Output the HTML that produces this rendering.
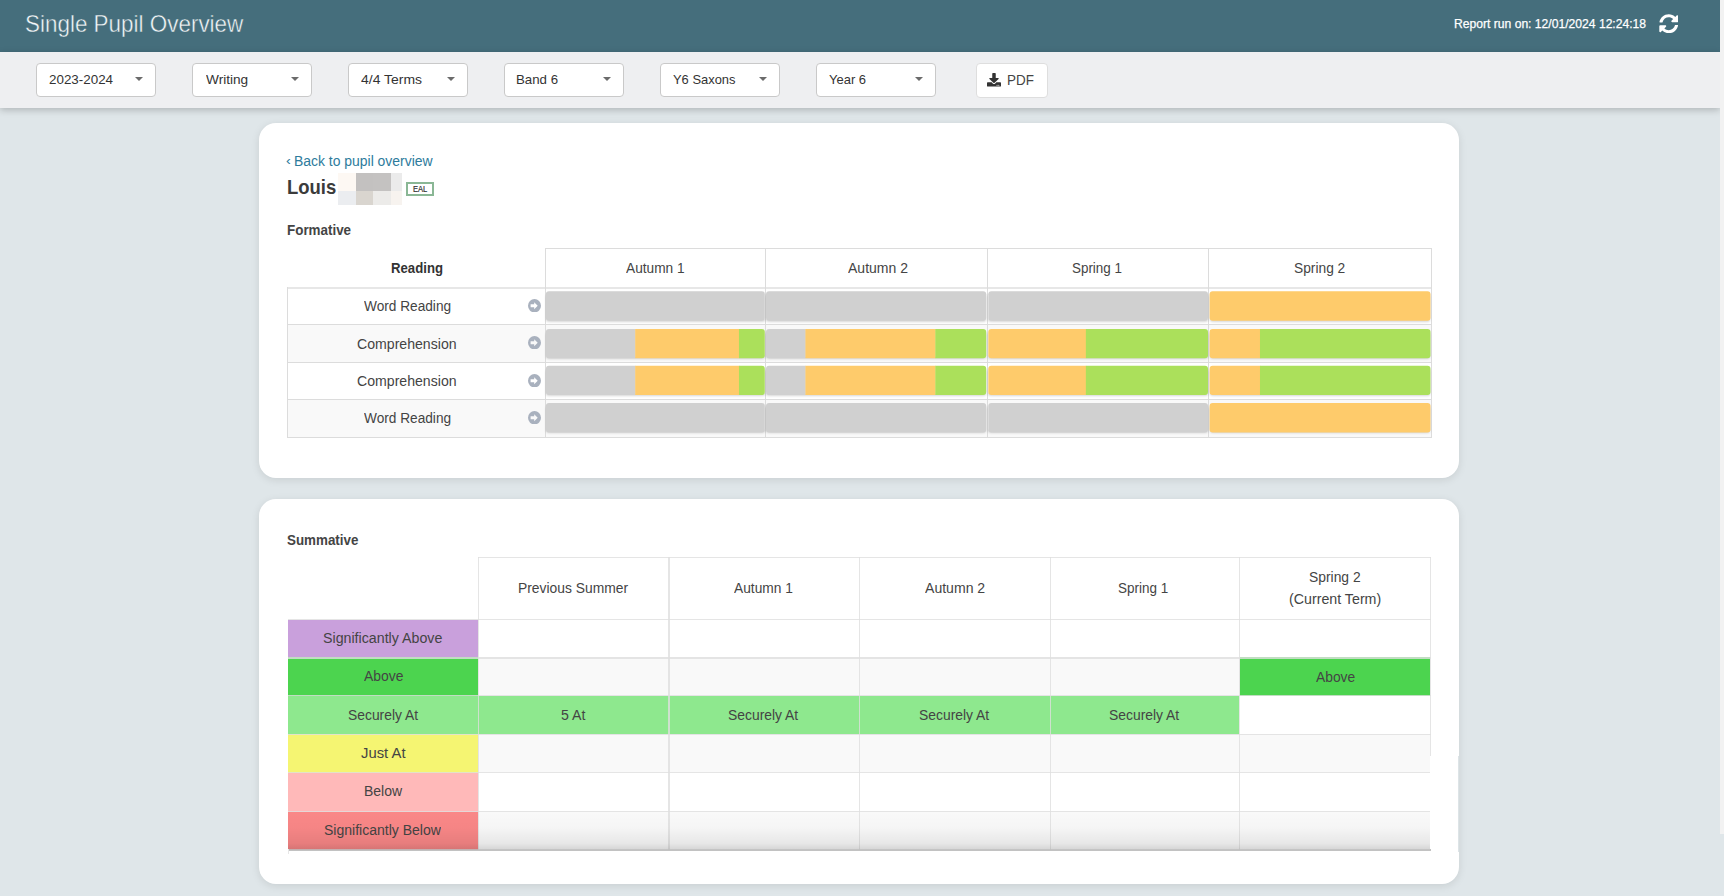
<!DOCTYPE html>
<html lang="en">
<head>
<meta charset="utf-8">
<title>Single Pupil Overview</title>
<style>
*{box-sizing:border-box;margin:0;padding:0}
html,body{width:1724px;height:896px;overflow:hidden}
body{background:#dfe6e9;font-family:"Liberation Sans",Arial,sans-serif;color:#444;position:relative;font-size:14px}
#app{position:absolute;left:0;top:0;width:1720px;height:896px;background:#dfe6e9;overflow:hidden}
#strip{position:absolute;left:1720px;top:0;width:4px;height:834px;background:#f2f2f2}
#hdr{position:absolute;left:0;top:0;width:1720px;height:52px;background:#456e7c}
#bar{position:absolute;left:0;top:52px;width:1720px;height:56px;background:#eeeff1;box-shadow:0 2px 7px rgba(0,0,0,.22)}
.dd{position:absolute;top:63px;width:120px;height:34px;border:1px solid #c9c9c9;border-radius:4px;background:#fff}
.dd:after{content:"";position:absolute;left:97.5px;top:13px;border-left:4.25px solid transparent;border-right:4.25px solid transparent;border-top:4.5px solid #6b6b6b}
.pdf{position:absolute;left:976px;top:63px;width:72px;height:35px;border:1px solid #dedede;border-radius:4px;background:#fff}
.card{position:absolute;left:259px;width:1200px;background:#fff;border-radius:17px;box-shadow:0 2px 9px rgba(0,0,0,.1)}
#c1{top:123px;height:355px}
#c2{top:499px;height:385px}
.x{position:absolute;white-space:nowrap;line-height:1;transform-origin:0 0;font-weight:normal}
.eal{position:absolute;left:406px;top:182px;width:28px;height:14px;border:2px solid #8ab795}
.px,.bg,svg{position:absolute}
.vl{position:absolute;width:1px;background:#dcdcdc}
.hl{position:absolute;height:1px;background:#dcdcdc}
.br{position:absolute;height:29.7px;border-radius:4px;overflow:hidden;background:#d0d0d0}
.sh{position:absolute;height:28.4px;border-radius:3px;box-shadow:0 2.5px 2.5px -.5px rgba(0,0,0,.16)}
.br i{position:absolute;top:0;height:30px}
.o{background:#fecb6b}.g{background:#abe05b}
</style>
</head>
<body>
<div id="app">
<div id="hdr"></div>
<h1 class="x" style="left:24.59px;top:11.60px;font-size:24.10px;color:#f3f7f8;transform:scaleX(0.9314);-webkit-text-stroke:.45px #456e7c;">Single Pupil Overview</h1>
<div class="x" style="left:1453.63px;top:17.90px;font-size:12.60px;color:#fff;transform:scaleX(0.9625);-webkit-text-stroke:.25px #fff;">Report run on: 12/01/2024 12:24:18</div>
<svg style="left:1658.8px;top:13.8px" width="19.5" height="19.5" viewBox="0 0 512 512"><path fill="#fff" d="M370.72 133.28C339.458 104.008 298.888 87.962 255.848 88c-77.458.068-144.328 53.178-162.791 126.85-1.344 5.363-6.122 9.150-11.651 9.150H24.103c-7.498 0-13.194-6.807-11.807-14.176C33.933 94.924 134.813 8 256 8c66.448 0 126.791 26.136 171.315 68.685L463.030 40.970C478.149 25.851 504 36.559 504 57.941V192c0 13.255-10.745 24-24 24H345.941c-21.382 0-32.090-25.851-16.971-40.971l41.750-41.749zM32 296h134.059c21.382 0 32.090 25.851 16.971 40.971l-41.750 41.750c31.262 29.273 71.835 45.319 114.876 45.280 77.418-.070 144.315-53.144 162.787-126.849 1.344-5.363 6.122-9.150 11.651-9.150h57.304c7.498 0 13.194 6.807 11.807 14.176C478.067 417.076 377.187 504 256 504c-66.448 0-126.791-26.136-171.315-68.685L48.970 471.030C33.851 486.149 8 475.441 8 454.059V320c0-13.255 10.745-24 24-24z"/></svg>
<div id="bar"></div>
<div class="dd" style="left:36px"></div>
<div class="x" style="left:48.73px;top:73.30px;font-size:13.45px;color:#333;transform:scaleX(0.9966);">2023-2024</div>
<div class="dd" style="left:192px"></div>
<div class="x" style="left:205.68px;top:73.30px;font-size:13.45px;color:#333;transform:scaleX(1.0155);">Writing</div>
<div class="dd" style="left:348px"></div>
<div class="x" style="left:361.22px;top:73.30px;font-size:13.45px;color:#333;transform:scaleX(1.0381);">4/4 Terms</div>
<div class="dd" style="left:504px"></div>
<div class="x" style="left:516.44px;top:73.30px;font-size:13.45px;color:#333;transform:scaleX(0.9873);">Band 6</div>
<div class="dd" style="left:660px"></div>
<div class="x" style="left:672.93px;top:73.30px;font-size:13.45px;color:#333;transform:scaleX(0.9615);">Y6 Saxons</div>
<div class="dd" style="left:816px"></div>
<div class="x" style="left:829.18px;top:73.30px;font-size:13.45px;color:#333;transform:scaleX(0.9660);">Year 6</div>
<div class="pdf"></div>
<svg style="left:987px;top:73px" width="14" height="13.6" viewBox="0 0 512 512" preserveAspectRatio="none"><path fill="#333" d="M216 0h80c13.300 0 24 10.700 24 24v168h87.700c17.800 0 26.700 21.500 14.100 34.100L269.700 378.300c-7.500 7.500-19.800 7.500-27.300 0L90.100 226.100c-12.600-12.600-3.700-34.100 14.100-34.100H192V24c0-13.300 10.700-24 24-24zm296 376v112c0 13.300-10.700 24-24 24H24c-13.300 0-24-10.700-24-24V376c0-13.300 10.700-24 24-24h146.700l49 49c20.100 20.100 52.500 20.100 72.600 0l49-49H488c13.300 0 24 10.700 24 24zm-124 88c0-11-9-20-20-20s-20 9-20 20 9 20 20 20 20-9 20-20zm64 0c0-11-9-20-20-20s-20 9-20 20 9 20 20 20 20-9 20-20z"/></svg>
<div class="x" style="left:1006.93px;top:73.00px;font-size:14.80px;color:#444;transform:scaleX(0.9075);">PDF</div>
<div class="card" id="c1"></div><div class="card" id="c2"></div>
<a><span class="x" style="left:286.32px;top:154.40px;font-size:13.00px;color:#2d7b9c;transform:scaleX(1.1077);">&lsaquo;</span><span class="x" style="left:294.18px;top:153.80px;font-size:14.45px;color:#2d7b9c;transform:scaleX(0.9648);">Back to pupil overview</span></a>
<h2 class="x" style="left:286.80px;top:176.60px;font-size:20.20px;font-weight:bold;color:#3b3b3b;transform:scaleX(0.9147);">Louis</h2>
<div class="px" style="left:338.0px;top:172.8px;width:18.1px;height:18.4px;background:#fdf8f3"></div>
<div class="px" style="left:355.9px;top:172.8px;width:17.3px;height:18.4px;background:#c3c1c0"></div>
<div class="px" style="left:373.0px;top:172.8px;width:18.2px;height:18.4px;background:#c4c2c1"></div>
<div class="px" style="left:391.0px;top:172.8px;width:11.2px;height:18.4px;background:#ebebeb"></div>
<div class="px" style="left:338.0px;top:191.0px;width:18.1px;height:14.1px;background:#ebedf0"></div>
<div class="px" style="left:355.9px;top:191.0px;width:17.3px;height:14.1px;background:#d9d5cf"></div>
<div class="px" style="left:373.0px;top:191.0px;width:18.2px;height:14.1px;background:#ecebe9"></div>
<div class="px" style="left:391.0px;top:191.0px;width:11.2px;height:14.1px;background:#f7f3ef"></div>
<div class="eal"></div>
<div class="x" style="left:412.89px;top:185.90px;font-size:8.20px;color:#333;transform:scaleX(0.9249);-webkit-text-stroke:.2px #333;">EAL</div>
<h3 class="x" style="left:286.63px;top:222.90px;font-size:14.45px;font-weight:bold;color:#444;transform:scaleX(0.9286);">Formative</h3>
<div class="bg" style="left:287px;top:324.4px;width:1145.0px;height:37.6px;background:#f9f9f9"></div>
<div class="bg" style="left:287px;top:399.3px;width:1145.0px;height:37.4px;background:#f9f9f9"></div>
<div class="hl" style="left:545px;top:248px;width:887px"></div>
<div class="hl" style="left:287px;top:287.3px;width:1145.0px;height:2px;background:#e7e7e7"></div>
<div class="hl" style="left:287px;top:324.4px;width:1145.0px"></div>
<div class="hl" style="left:287px;top:362.0px;width:1145.0px"></div>
<div class="hl" style="left:287px;top:399.3px;width:1145.0px"></div>
<div class="hl" style="left:287px;top:436.7px;width:1145.0px"></div>
<div class="vl" style="left:287px;top:287.3px;height:150.4px"></div>
<div class="vl" style="left:545px;top:248px;height:189.7px"></div>
<div class="vl" style="left:765px;top:248px;height:189.7px"></div>
<div class="vl" style="left:987px;top:248px;height:189.7px"></div>
<div class="vl" style="left:1208px;top:248px;height:189.7px"></div>
<div class="vl" style="left:1431px;top:248px;height:189.7px"></div>
<div class="x" style="left:390.54px;top:259.90px;font-size:15.10px;font-weight:bold;color:#333;transform:scaleX(0.8732);">Reading</div>
<div class="x" style="left:625.75px;top:259.80px;font-size:15.10px;color:#444;transform:scaleX(0.9070);">Autumn 1</div>
<div class="x" style="left:847.50px;top:259.80px;font-size:15.10px;color:#444;transform:scaleX(0.9276);">Autumn 2</div>
<div class="x" style="left:1072.40px;top:259.80px;font-size:15.10px;color:#444;transform:scaleX(0.8882);">Spring 1</div>
<div class="x" style="left:1293.63px;top:259.80px;font-size:15.10px;color:#444;transform:scaleX(0.9122);">Spring 2</div>
<div class="x" style="left:364.03px;top:298.40px;font-size:15.10px;color:#444;transform:scaleX(0.9054);">Word Reading</div>
<svg style="left:527.75px;top:298.7px" width="13" height="13.4" viewBox="0 0 13 13" preserveAspectRatio="none"><path fill="#a9b1be" fill-rule="evenodd" d="M6.5 0a6.5 6.500 0 1 0 0 13a6.500 6.500 0 1 0 0-13zM2.600 5.100h3.600v-2l3.500 3.400l-3.500 3.400v-2h-3.600z"/></svg>
<div class="sh" style="left:545.9px;top:291.3px;width:218.9px"></div>
<div class="sh" style="left:766.0px;top:291.3px;width:220.2px"></div>
<div class="sh" style="left:988.3px;top:291.3px;width:219.7px"></div>
<div class="sh" style="left:1209.6px;top:291.3px;width:220.9px"></div>
<div class="x" style="left:357.19px;top:336.00px;font-size:15.10px;color:#444;transform:scaleX(0.9345);">Comprehension</div>
<svg style="left:527.75px;top:335.9px" width="13" height="13.4" viewBox="0 0 13 13" preserveAspectRatio="none"><path fill="#a9b1be" fill-rule="evenodd" d="M6.5 0a6.5 6.500 0 1 0 0 13a6.500 6.500 0 1 0 0-13zM2.600 5.100h3.600v-2l3.500 3.400l-3.500 3.400v-2h-3.600z"/></svg>
<div class="sh" style="left:545.9px;top:328.9px;width:218.9px"></div>
<div class="sh" style="left:766.0px;top:328.9px;width:220.2px"></div>
<div class="sh" style="left:988.3px;top:328.9px;width:219.7px"></div>
<div class="sh" style="left:1209.6px;top:328.9px;width:220.9px"></div>
<div class="x" style="left:357.19px;top:373.00px;font-size:15.10px;color:#444;transform:scaleX(0.9345);">Comprehension</div>
<svg style="left:527.75px;top:373.5px" width="13" height="13.4" viewBox="0 0 13 13" preserveAspectRatio="none"><path fill="#a9b1be" fill-rule="evenodd" d="M6.5 0a6.5 6.500 0 1 0 0 13a6.500 6.500 0 1 0 0-13zM2.600 5.100h3.600v-2l3.500 3.400l-3.500 3.400v-2h-3.600z"/></svg>
<div class="sh" style="left:545.9px;top:365.7px;width:218.9px"></div>
<div class="sh" style="left:766.0px;top:365.7px;width:220.2px"></div>
<div class="sh" style="left:988.3px;top:365.7px;width:219.7px"></div>
<div class="sh" style="left:1209.6px;top:365.7px;width:220.9px"></div>
<div class="x" style="left:364.03px;top:410.30px;font-size:15.10px;color:#444;transform:scaleX(0.9054);">Word Reading</div>
<svg style="left:527.75px;top:410.7px" width="13" height="13.4" viewBox="0 0 13 13" preserveAspectRatio="none"><path fill="#a9b1be" fill-rule="evenodd" d="M6.5 0a6.5 6.500 0 1 0 0 13a6.500 6.500 0 1 0 0-13zM2.600 5.100h3.600v-2l3.500 3.400l-3.500 3.400v-2h-3.600z"/></svg>
<div class="sh" style="left:545.9px;top:403.0px;width:218.9px"></div>
<div class="sh" style="left:766.0px;top:403.0px;width:220.2px"></div>
<div class="sh" style="left:988.3px;top:403.0px;width:219.7px"></div>
<div class="sh" style="left:1209.6px;top:403.0px;width:220.9px"></div>
<svg style="left:540px;top:285px" width="895" height="155" viewBox="540 285 895 155"><path fill="#d0d0d0" d="M548.90 291.30H761.80A3 3 0 0 1 764.80 294.30V317.70A3 3 0 0 1 761.80 320.70H548.90A3 3 0 0 1 545.90 317.70V294.30A3 3 0 0 1 548.90 291.30Z"/><path fill="#d0d0d0" d="M769.00 291.30H983.20A3 3 0 0 1 986.20 294.30V317.70A3 3 0 0 1 983.20 320.70H769.00A3 3 0 0 1 766.00 317.70V294.30A3 3 0 0 1 769.00 291.30Z"/><path fill="#d0d0d0" d="M991.30 291.30H1205.00A3 3 0 0 1 1208.00 294.30V317.70A3 3 0 0 1 1205.00 320.70H991.30A3 3 0 0 1 988.30 317.70V294.30A3 3 0 0 1 991.30 291.30Z"/><path fill="#fecb6b" d="M1212.60 291.30H1427.50A3 3 0 0 1 1430.50 294.30V317.70A3 3 0 0 1 1427.50 320.70H1212.60A3 3 0 0 1 1209.60 317.70V294.30A3 3 0 0 1 1212.60 291.30Z"/><path fill="#d0d0d0" d="M548.90 328.90H635.61V358.30H548.90A3 3 0 0 1 545.90 355.30V331.90A3 3 0 0 1 548.90 328.90Z"/><path fill="#fecb6b" d="M635.21 328.90H739.37V358.30H635.21V328.90Z"/><path fill="#abe05b" d="M738.97 328.90H761.80A3 3 0 0 1 764.80 331.90V355.30A3 3 0 0 1 761.80 358.30H738.97V328.90Z"/><path fill="#d0d0d0" d="M769.00 328.90H805.82V358.30H769.00A3 3 0 0 1 766.00 355.30V331.90A3 3 0 0 1 769.00 328.90Z"/><path fill="#fecb6b" d="M805.42 328.90H935.73V358.30H805.42V328.90Z"/><path fill="#abe05b" d="M935.33 328.90H983.20A3 3 0 0 1 986.20 331.90V355.30A3 3 0 0 1 983.20 358.30H935.33V328.90Z"/><path fill="#fecb6b" d="M991.30 328.90H1086.25V358.30H991.30A3 3 0 0 1 988.30 355.30V331.90A3 3 0 0 1 991.30 328.90Z"/><path fill="#abe05b" d="M1085.85 328.90H1205.00A3 3 0 0 1 1208.00 331.90V355.30A3 3 0 0 1 1205.00 358.30H1085.85V328.90Z"/><path fill="#fecb6b" d="M1212.60 328.90H1260.37V358.30H1212.60A3 3 0 0 1 1209.60 355.30V331.90A3 3 0 0 1 1212.60 328.90Z"/><path fill="#abe05b" d="M1259.97 328.90H1427.50A3 3 0 0 1 1430.50 331.90V355.30A3 3 0 0 1 1427.50 358.30H1259.97V328.90Z"/><path fill="#d0d0d0" d="M548.90 365.70H635.61V395.10H548.90A3 3 0 0 1 545.90 392.10V368.70A3 3 0 0 1 548.90 365.70Z"/><path fill="#fecb6b" d="M635.21 365.70H739.37V395.10H635.21V365.70Z"/><path fill="#abe05b" d="M738.97 365.70H761.80A3 3 0 0 1 764.80 368.70V392.10A3 3 0 0 1 761.80 395.10H738.97V365.70Z"/><path fill="#d0d0d0" d="M769.00 365.70H805.82V395.10H769.00A3 3 0 0 1 766.00 392.10V368.70A3 3 0 0 1 769.00 365.70Z"/><path fill="#fecb6b" d="M805.42 365.70H935.73V395.10H805.42V365.70Z"/><path fill="#abe05b" d="M935.33 365.70H983.20A3 3 0 0 1 986.20 368.70V392.10A3 3 0 0 1 983.20 395.10H935.33V365.70Z"/><path fill="#fecb6b" d="M991.30 365.70H1086.25V395.10H991.30A3 3 0 0 1 988.30 392.10V368.70A3 3 0 0 1 991.30 365.70Z"/><path fill="#abe05b" d="M1085.85 365.70H1205.00A3 3 0 0 1 1208.00 368.70V392.10A3 3 0 0 1 1205.00 395.10H1085.85V365.70Z"/><path fill="#fecb6b" d="M1212.60 365.70H1260.37V395.10H1212.60A3 3 0 0 1 1209.60 392.10V368.70A3 3 0 0 1 1212.60 365.70Z"/><path fill="#abe05b" d="M1259.97 365.70H1427.50A3 3 0 0 1 1430.50 368.70V392.10A3 3 0 0 1 1427.50 395.10H1259.97V365.70Z"/><path fill="#d0d0d0" d="M548.90 403.00H761.80A3 3 0 0 1 764.80 406.00V429.40A3 3 0 0 1 761.80 432.40H548.90A3 3 0 0 1 545.90 429.40V406.00A3 3 0 0 1 548.90 403.00Z"/><path fill="#d0d0d0" d="M769.00 403.00H983.20A3 3 0 0 1 986.20 406.00V429.40A3 3 0 0 1 983.20 432.40H769.00A3 3 0 0 1 766.00 429.40V406.00A3 3 0 0 1 769.00 403.00Z"/><path fill="#d0d0d0" d="M991.30 403.00H1205.00A3 3 0 0 1 1208.00 406.00V429.40A3 3 0 0 1 1205.00 432.40H991.30A3 3 0 0 1 988.30 429.40V406.00A3 3 0 0 1 991.30 403.00Z"/><path fill="#fecb6b" d="M1212.60 403.00H1427.50A3 3 0 0 1 1430.50 406.00V429.40A3 3 0 0 1 1427.50 432.40H1212.60A3 3 0 0 1 1209.60 429.40V406.00A3 3 0 0 1 1212.60 403.00Z"/></svg>
<h3 class="x" style="left:286.80px;top:533.00px;font-size:14.45px;font-weight:bold;color:#444;transform:scaleX(0.9271);">Summative</h3>
<div class="bg" style="left:477.9px;top:656.6px;width:952.3px;height:38.5px;background:#f9f9f9"></div>
<div class="bg" style="left:477.9px;top:733.7px;width:952.3px;height:38.6px;background:#f9f9f9"></div>
<div class="bg" style="left:477.9px;top:811.2px;width:952.3px;height:37.6px;background:#f9f9f9"></div>
<div class="bg" style="left:287.6px;top:619.5px;width:190.8px;height:37.9px;background:#c9a0dc"></div>
<div class="bg" style="left:287.6px;top:657.1px;width:190.8px;height:38.8px;background:#4cd44f"></div>
<div class="bg" style="left:287.6px;top:695.6px;width:190.8px;height:38.9px;background:#8ee88e"></div>
<div class="bg" style="left:287.6px;top:734.2px;width:190.8px;height:38.9px;background:#f5f572"></div>
<div class="bg" style="left:287.6px;top:772.8px;width:190.8px;height:39.2px;background:#ffb9b9"></div>
<div class="bg" style="left:287.6px;top:811.7px;width:190.8px;height:37.9px;background:#f98787"></div>
<div class="bg" style="left:477.9px;top:695.6px;width:761.6px;height:38.9px;background:#8ee88e"></div>
<div class="bg" style="left:1240.0px;top:657.1px;width:190.2px;height:38.8px;background:#4cd44f"></div>
<div class="hl" style="left:477.9px;top:556.7px;width:953.1px;height:1.0px;background:rgba(222,222,222,.8)"></div>
<div class="hl" style="left:287.6px;top:619.0px;width:1143.4px;height:1.0px;background:rgba(222,222,222,.8)"></div>
<div class="hl" style="left:287.6px;top:656.6px;width:1143.4px;height:2.2px;background:rgba(222,222,222,.8)"></div>
<div class="hl" style="left:287.6px;top:695.1px;width:1143.4px;height:0.9px;background:rgba(222,222,222,.8)"></div>
<div class="hl" style="left:287.6px;top:733.7px;width:1143.4px;height:0.9px;background:rgba(222,222,222,.8)"></div>
<div class="hl" style="left:287.6px;top:772.3px;width:1143.4px;height:0.9px;background:rgba(222,222,222,.8)"></div>
<div class="hl" style="left:287.6px;top:811.2px;width:1143.4px;height:0.9px;background:rgba(222,222,222,.8)"></div>
<div class="hl" style="left:287.6px;top:848.8px;width:1143.4px;height:2.0px;background:rgba(222,222,222,.8)"></div>
<div class="vl" style="left:477.9px;top:556.7px;height:293.1px;background:rgba(222,222,222,.8);width:1.0px"></div>
<div class="vl" style="left:668.4px;top:556.7px;height:293.1px;background:rgba(222,222,222,.8);width:1.8px"></div>
<div class="vl" style="left:858.6px;top:556.7px;height:293.1px;background:rgba(222,222,222,.8);width:1.0px"></div>
<div class="vl" style="left:1050.3px;top:556.7px;height:293.1px;background:rgba(222,222,222,.8);width:1.0px"></div>
<div class="vl" style="left:1239.2px;top:556.7px;height:293.1px;background:rgba(222,222,222,.8);width:1.0px"></div>
<div class="vl" style="left:1430.2px;top:556.7px;height:293.1px;background:rgba(222,222,222,.8);width:1.0px"></div>
<div class="x" style="left:323.46px;top:629.80px;font-size:15.10px;color:#444;transform:scaleX(0.9417);">Significantly Above</div>
<div class="x" style="left:363.75px;top:668.40px;font-size:15.10px;color:#444;transform:scaleX(0.9210);">Above</div>
<div class="x" style="left:347.83px;top:706.90px;font-size:15.10px;color:#444;transform:scaleX(0.9183);">Securely At</div>
<div class="x" style="left:360.83px;top:744.60px;font-size:15.10px;color:#444;transform:scaleX(0.9823);">Just At</div>
<div class="x" style="left:363.53px;top:783.00px;font-size:15.10px;color:#444;transform:scaleX(0.9264);">Below</div>
<div class="x" style="left:324.37px;top:821.70px;font-size:15.10px;color:#444;transform:scaleX(0.9285);">Significantly Below</div>
<div class="x" style="left:560.71px;top:707.00px;font-size:15.10px;color:#444;transform:scaleX(0.9390);">5 At</div>
<div class="x" style="left:728.13px;top:707.00px;font-size:15.10px;color:#444;transform:scaleX(0.9196);">Securely At</div>
<div class="x" style="left:918.78px;top:707.00px;font-size:15.10px;color:#444;transform:scaleX(0.9196);">Securely At</div>
<div class="x" style="left:1109.08px;top:707.00px;font-size:15.10px;color:#444;transform:scaleX(0.9196);">Securely At</div>
<div class="x" style="left:1316.00px;top:668.70px;font-size:15.10px;color:#444;transform:scaleX(0.9162);">Above</div>
<div class="x" style="left:518.14px;top:579.80px;font-size:15.10px;color:#444;transform:scaleX(0.9175);">Previous Summer</div>
<div class="x" style="left:733.50px;top:579.80px;font-size:15.10px;color:#444;transform:scaleX(0.9109);">Autumn 1</div>
<div class="x" style="left:924.50px;top:579.80px;font-size:15.10px;color:#444;transform:scaleX(0.9315);">Autumn 2</div>
<div class="x" style="left:1118.39px;top:579.80px;font-size:15.10px;color:#444;transform:scaleX(0.8927);">Spring 1</div>
<div class="x" style="left:1309.28px;top:569.00px;font-size:15.10px;color:#444;transform:scaleX(0.9177);">Spring 2</div>
<div class="x" style="left:1288.95px;top:591.20px;font-size:15.10px;color:#444;transform:scaleX(0.9424);">(Current Term)</div>
<div class="bg" style="left:287.6px;top:812px;width:1143.5px;height:38.8px;background:linear-gradient(to bottom,rgba(0,0,0,0) 0%,rgba(0,0,0,.015) 40%,rgba(0,0,0,.07) 80%,rgba(0,0,0,.16) 100%)"></div>
<div class="vl" style="left:287.5px;top:849px;height:5px;background:#e6e6e6"></div>
<div class="bg" style="left:1430px;top:756px;width:2px;height:93px;background:#fff"></div>
<div class="bg" style="left:1458.4px;top:756px;width:1px;height:96px;background:#dde4e7"></div>
</div>
<div id="strip"></div>
</body>
</html>
